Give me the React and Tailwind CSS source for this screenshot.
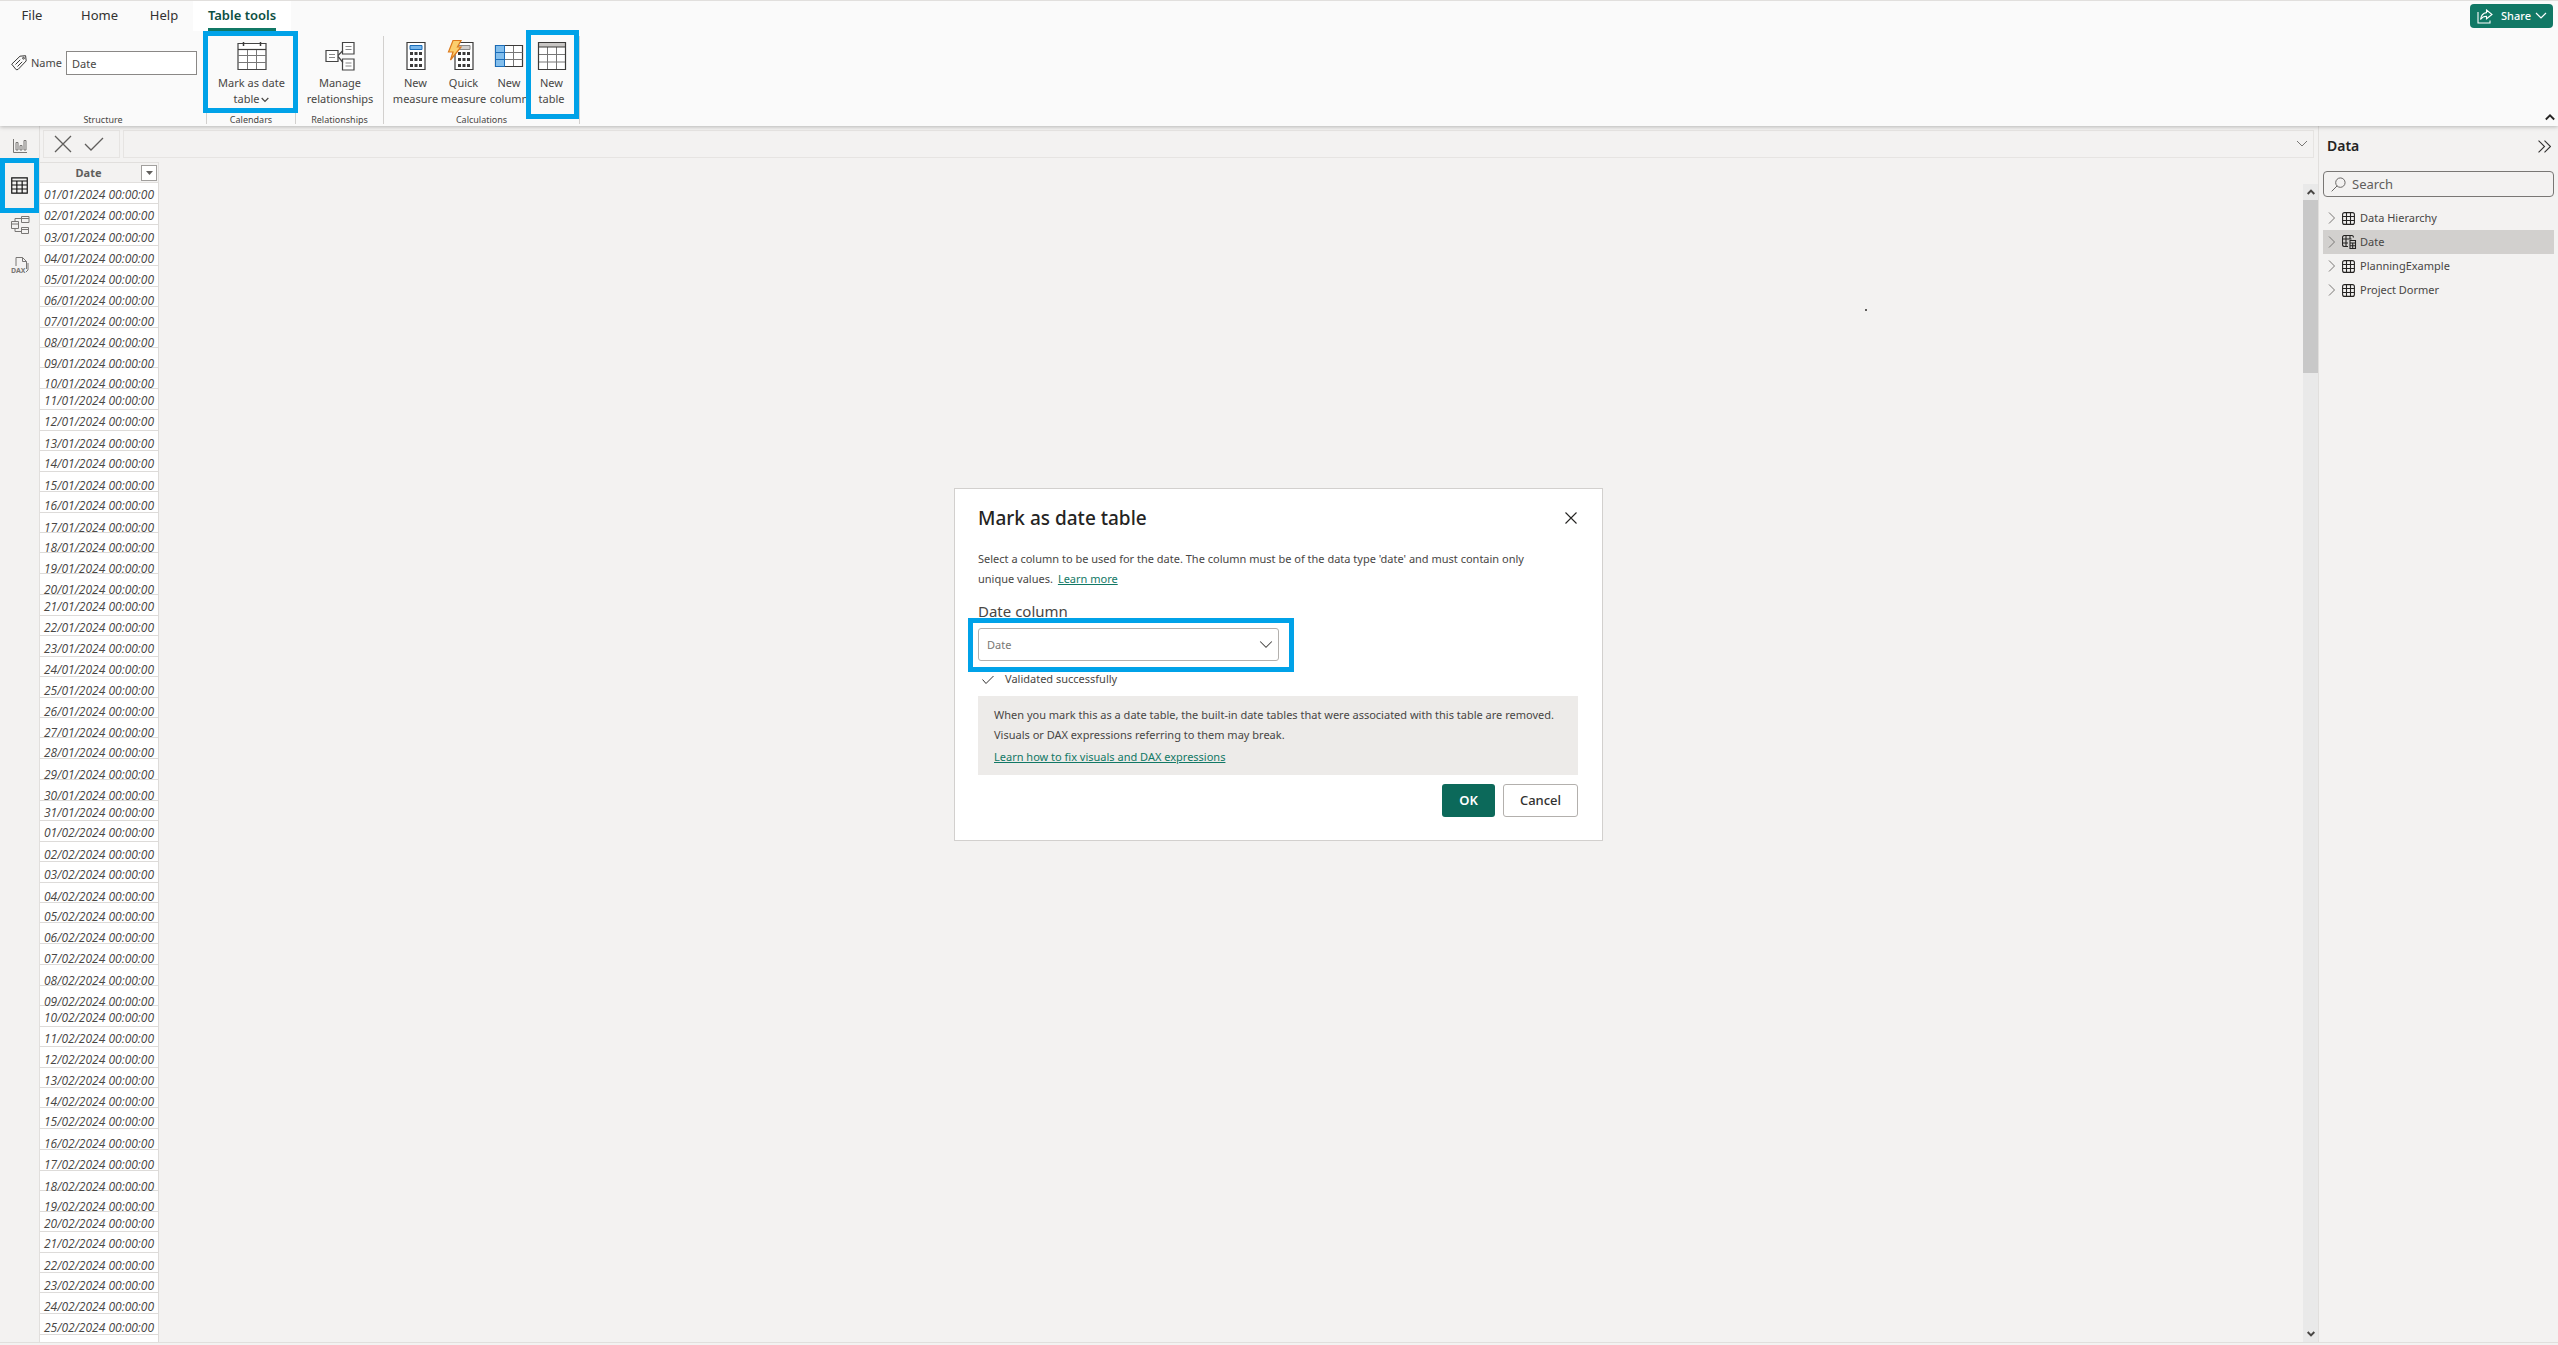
import { useState } from 'react';

// the grid repeats these heights, rows are not all the same
const ROW_HEIGHTS = [21, 21, 21, 20, 21, 20, 21, 20, 20];

const pad = (n) => String(n).padStart(2, '0');

const dates = Array.from({ length: 56 }, (_, i) => {
  const day = i < 31 ? i + 1 : i - 30;
  const month = i < 31 ? 1 : 2;
  return `${pad(day)}/${pad(month)}/2024 00:00:00`;
});

const tables = ['Data Hierarchy', 'Date', 'PlanningExample', 'Project Dormer'];

function Highlight({ className }) {
  return <span className={`pointer-events-none absolute z-10 border-[5px] border-[#00a2e8] ${className}`} />;
}

function Chevron({ className, d = 'M1 3l5 5 5-5', width = 1 }) {
  return (
    <svg viewBox="0 0 12 12" className={className} fill="none" stroke="currentColor" strokeWidth={width}>
      <path d={d} />
    </svg>
  );
}

function TagIcon() {
  return (
    <svg viewBox="0 0 16 16" className="size-4 shrink-0" fill="none" stroke="#3b3a39" strokeWidth="1">
      <path d="M.7 9.2L9 1.2l5.6-.5.6 5.2-8.2 8.6-1.8.2L.7 9.2z" />
      <path d="M4.5 9.5l4.7-4.7M6.5 11.5l4.7-4.7" />
      <circle cx="12.5" cy="3.2" r=".9" />
    </svg>
  );
}

function CalendarIcon() {
  return (
    <svg viewBox="0 0 30 30" className="size-[30px]" fill="none" stroke="#3b3a39" strokeWidth="1">
      <path d="M1 2.5h28v26H1z" fill="#fff" stroke="#444" strokeWidth="1.2" />
      <path d="M1 8.5h28" strokeWidth="1.2" />
      <path d="M6.5 1v4M23.5 1v4" strokeWidth="1.5" />
      <path d="M1 14.5h28M1 21.5h28M10.5 9v19M19.5 9v19" stroke="#777" />
    </svg>
  );
}

function RelationshipsIcon() {
  return (
    <svg viewBox="0 0 30 30" className="size-[30px]" fill="none" stroke="#444" strokeWidth="1.2">
      <path d="M1 9.5h12v11H1zM17.500 1.500h11.500v11.500H17.500zM17.500 18h11.500v11H17.500z" fill="#fff" />
      <path d="M13 14.500l5-5M13 15.500l5 6" />
      <path d="M4 13.500h6M4 16.500h6M20.500 5.500h6M20.500 8.500h6M20.500 22h6M20.500 25h6" stroke="#888" />
    </svg>
  );
}

function CalculatorIcon({ screen = '#7ab8ec', edge = '#1a6cb8', bolt }) {
  return (
    <svg viewBox="0 0 30 30" className="size-[30px] overflow-visible">
      <path d="M6 1.500h18v27H6z" fill="#fff" stroke="#3b3a39" strokeWidth="1.2" />
      <path d="M9 4.500h12v4H9z" fill={screen} stroke={edge} />
      <path
        d="M9 11h3v3H9zM13.500 11h3v3h-3zM18 11h3v3h-3zM9 17h3v3H9zM13.500 17h3v3h-3zM18 17h3v3h-3zM9 23h3v3H9zM13.500 23h3v3h-3zM18 23h3v3h-3z"
        fill="#3b3a39"
      />
      {bolt && (
        <path d="M4 -.5h8L8.500 6H12L1.500 19l2.500-8H-.5z" fill="#fbcf6e" stroke="#dd7a1c" strokeWidth="1.2" />
      )}
    </svg>
  );
}

function ColumnIcon() {
  return (
    <svg viewBox="0 0 30 30" className="size-[30px]" fill="none" stroke="#555" strokeWidth="1">
      <path d="M1.500 4.500h27v21h-27z" fill="#fff" stroke="#3b3a39" strokeWidth="1.2" />
      <path d="M10.500 11.500h18M10.500 18.500h18M19.500 5v20" stroke="#777" />
      <path d="M1.500 4.500h9v21h-9z" fill="#83beec" stroke="#1a6cb8" />
      <path d="M1.500 11.500h9M1.500 18.500h9" stroke="#1a6cb8" />
    </svg>
  );
}

function NewTableIcon() {
  return (
    <svg viewBox="0 0 30 30" className="size-[30px]" fill="none">
      <path d="M1.500 1.500h27v27h-27z" fill="#fff" />
      <path d="M2 2h26v4H2z" fill="#c8c6c4" />
      <path d="M1.500 13.500h27M1.500 21h27M10.500 6v22M19.500 6v22" stroke="#777" />
      <path d="M1.500 1.500h27v27h-27zM1.500 6h27" stroke="#3b3a39" strokeWidth="1.2" />
    </svg>
  );
}

function ReportViewIcon() {
  return (
    <svg viewBox="0 0 16 16" className="size-4" fill="none" stroke="#797775" strokeWidth="1">
      <path d="M1.500 1v13.500H15M4 4.500h2v7.500H4zM8 7.500h2V12H8zM12 2.500h2V12h-2z" />
    </svg>
  );
}

function TableViewIcon() {
  return (
    <svg viewBox="0 0 16 16" className="size-[17px]" fill="none" stroke="#111" strokeWidth="1.1">
      <path d="M.7.9h14.600v14.200H.7zM.7 3.800h14.600M.7 7.500h14.600M.7 11.300h14.600M5.500 3.800v11.200M10.500 3.800v11.200" />
    </svg>
  );
}

function ModelViewIcon() {
  return (
    <svg viewBox="0 0 20 20" className="size-5" fill="none" stroke="#797775" strokeWidth="1">
      <path d="M1.500 6.500h7v7h-7zM1.500 9h7M11.500 1.500h7.500v6h-7.500zM11.500 3.500h7.500M11.500 12.500h7v6h-7zM11.500 14.500h7" />
      <path d="M5 6.500v-3h6.500M5 13.500v3h6.500" />
    </svg>
  );
}

function DaxViewIcon() {
  return (
    <svg viewBox="0 0 18 18" className="size-[18px] overflow-visible" fill="none" stroke="#797775" strokeWidth="1">
      <path d="M5 10V1.500h6.500l4 4V13M11.500 1.500v4h4M17 7v7l-2 2" />
      <text x="0" y="17" fontSize="7" fontWeight="700" fill="#797775" stroke="none">
        DAX
      </text>
    </svg>
  );
}

function FieldTableIcon({ calculated }) {
  if (calculated) {
    return (
      <svg viewBox="0 0 15 14" className="h-[14px] w-[15px]" fill="none" stroke="#252423" strokeWidth="1.1">
        <path d="M6 11.500H2.500a2 2 0 0 1-2-2v-7a2 2 0 0 1 2-2h7a2 2 0 0 1 2 2M.5 4h9M.5 8h5.500M4 .5v11M8 .5V4" />
        <path d="M8 5.500h5.500v8H8zM8 8h5.500M8 10.700h5.500M10.700 8v5.500" />
      </svg>
    );
  }
  return (
    <svg viewBox="0 0 13 13" className="mr-0.5 size-[13px]" fill="none" stroke="#252423" strokeWidth="1.1">
      <rect x=".6" y=".6" width="11.800" height="11.800" rx="2" />
      <path d="M4.500.6v11.800M8.500.6v11.800M.6 4.500h11.800M.6 8.500h11.800" />
    </svg>
  );
}

function ShareIcon() {
  return (
    <svg viewBox="0 0 16 15" className="h-[15px] w-4" fill="none" stroke="#fff" strokeWidth="1.1">
      <path d="M1 3v11h12v-2.500" />
      <path d="M9.500 1l5.500 4.500-5.500 4.300V7.300C7 7.300 5 8.300 3.500 10.500 4 6.500 6 4 9.500 3.600z" />
    </svg>
  );
}

function RibbonButton({ icon, children, className = '' }) {
  return (
    <button className={`flex flex-col items-center whitespace-nowrap text-[11px] leading-4 text-[#484644] ${className}`}>
      {icon}
      <span className="mt-1">{children}</span>
    </button>
  );
}

function RibbonGroup({ label, children, className = '' }) {
  return (
    <section className={`relative flex flex-col justify-between border-r border-[#d2d0ce] ${className}`}>
      <div className="flex justify-center pt-[5px] pl-px">{children}</div>
      <div className="text-center text-[9px] leading-[9px] text-[#484644]">{label}</div>
    </section>
  );
}

function Ribbon() {
  const [name, setName] = useState('Date');

  return (
    <header className="relative z-10 border-t border-[#e1dfdd] bg-[#fafafa] shadow-[0_1px_4px_rgba(0,0,0,0.25)]">
      <div className="flex h-[30px] items-start">
        <nav className="flex h-full items-center text-[13px] text-[#323130]">
          <button className="w-16 text-center">File</button>
          <button className="w-[71px] text-center">Home</button>
          <button className="w-[58px] text-center">Help</button>
          <button className="relative h-full w-[98px] bg-white text-center font-semibold text-[#0c4f43]">
            Table tools
            <span className="absolute inset-x-[15px] bottom-0 h-[3px] bg-[#117865]" />
          </button>
        </nav>
        <button className="mt-[3px] mr-[5px] ml-auto flex h-6 w-[83px] items-center rounded bg-[#117865] pl-[7px] text-[11px] font-medium text-white">
          <ShareIcon />
          <span className="ml-2">Share</span>
          <Chevron className="ml-1 size-3" width={1.2} />
        </button>
      </div>

      <div className="flex h-[95px] items-stretch">
        <div className="flex pt-[5px] pb-0.5">
          <RibbonGroup label="Structure" className="w-[207px]">
            <div className="flex w-full items-center pt-2.5 pl-2.5">
              <TagIcon />
              <label htmlFor="name" className="ml-1 w-[35px] text-[11px] text-[#484644]">Name</label>
              <input
                id="name"
                value={name}
                onChange={(e) => setName(e.target.value)}
                className="h-6 w-[131px] border border-[#8a8886] bg-white px-[5px] text-[11px] text-[#484644]"
              />
            </div>
          </RibbonGroup>
          <RibbonGroup label="Calendars" className="w-[89px]">
            <RibbonButton icon={<CalendarIcon />}>
              Mark as date
              <br />
              table
              <Chevron className="ml-0.5 inline size-2" width={1.8} />
            </RibbonButton>
            <Highlight className="-top-[5px] -right-[3px] -left-1 h-[82px]" />
          </RibbonGroup>
          <RibbonGroup label="Relationships" className="w-[88px]">
            <RibbonButton icon={<RelationshipsIcon />}>
              Manage
              <br />
              relationships
            </RibbonButton>
          </RibbonGroup>
          <RibbonGroup label="Calculations" className="w-[196px]">
            <RibbonButton icon={<CalculatorIcon />} className="w-12">
              New
              <br />
              measure
            </RibbonButton>
            <RibbonButton icon={<CalculatorIcon screen="#d2d0ce" edge="#8a8886" bolt />} className="w-12">
              Quick
              <br />
              measure
            </RibbonButton>
            <RibbonButton icon={<ColumnIcon />} className="w-[43px]">
              New
              <br />
              column
            </RibbonButton>
            <RibbonButton icon={<NewTableIcon />} className="w-[42px]">
              New
              <br />
              table
            </RibbonButton>
            <Highlight className="-top-1.5 right-0 h-[89px] w-[53px]" />
          </RibbonGroup>
        </div>
        <button aria-label="Collapse ribbon" className="mt-auto mr-[3px] mb-1 ml-auto text-[#252423]">
          <Chevron className="size-2.5" d="M1 9l5-5 5 5" width={2.2} />
        </button>
      </div>
    </header>
  );
}

function ViewRail() {
  return (
    <nav className="flex w-10 shrink-0 flex-col items-center border-r border-[#e1dfdd]">
      <button aria-label="Report view" className="flex h-8 w-full items-center justify-center pt-2">
        <ReportViewIcon />
      </button>
      <button aria-label="Table view" className="relative flex h-[55px] w-full items-center justify-center">
        <TableViewIcon />
        <Highlight className="inset-y-0 right-0 left-0" />
      </button>
      <button aria-label="Model view" className="mt-0.5 flex h-5 w-full items-center justify-center">
        <ModelViewIcon />
      </button>
      <button aria-label="DAX query view" className="mt-5 flex h-5 w-full items-center justify-center">
        <DaxViewIcon />
      </button>
    </nav>
  );
}

function FormulaBar() {
  return (
    <div className="flex gap-[3px] py-1 pr-1 pl-[3px]">
      <div className="flex h-7 w-[77px] items-center gap-3 border border-[#e6e4e2] pl-2.5 text-[#605e5c]">
        <button aria-label="Cancel formula">
          <svg viewBox="0 0 18 18" className="size-[18px]" fill="none" stroke="currentColor" strokeWidth="1.3">
            <path d="M1 1l16 16M17 1L1 17" />
          </svg>
        </button>
        <button aria-label="Commit formula">
          <svg viewBox="0 0 20 18" className="h-[18px] w-5" fill="none" stroke="currentColor" strokeWidth="1.3">
            <path d="M1 9l6 6L19 3" />
          </svg>
        </button>
      </div>
      <div className="flex h-7 flex-1 items-center border border-[#e6e4e2] pr-[5px]">
        <input aria-label="Formula" className="h-full flex-1 px-2 text-[11px] outline-none" />
        <button aria-label="Expand formula bar" className="text-[#797775]">
          <Chevron className="size-3" />
        </button>
      </div>
    </div>
  );
}

function DataGrid() {
  return (
    <div className="relative flex flex-1">
      <div className="flex flex-col bg-white">
        <table className="w-[117px] border-separate border-spacing-0 text-[#484644]">
          <thead>
            <tr className="h-[21px]">
              <th className="border-y border-r border-[#e1dfdd] bg-[#f3f2f1] p-0">
                <div className="flex items-center">
                  <span className="flex-1 pr-1 text-[11px] leading-[18px] font-bold text-[#605e5c]">Date</span>
                  <button aria-label="Filter Date" className="mr-px flex size-4 justify-center border border-[#a19f9d] bg-white pt-[5px]">
                    <svg viewBox="0 0 7 4" className="h-1 w-[7px]" fill="#605e5c">
                      <path d="M0 0h7L3.500 4z" />
                    </svg>
                  </button>
                </div>
              </th>
            </tr>
          </thead>
          <tbody>
            {dates.map((date, i) => (
              <tr key={date} style={{ height: ROW_HEIGHTS[i % ROW_HEIGHTS.length] }}>
                <td
                  className="border-r border-b border-[#dddbd9] px-1 text-right align-top font-['Open_Sans',sans-serif] text-[12px] leading-[6px] whitespace-nowrap italic"
                  style={{ paddingTop: 9 + Math.floor((i % 10) / 2) }}
                >
                  {date}
                </td>
              </tr>
            ))}
          </tbody>
        </table>
        <div className="flex-1 border-r border-[#dddbd9]" />
      </div>
      {/* stray mark on the empty canvas */}
      <span className="absolute top-[147px] left-[1825px] size-0.5 bg-[#605e5c]" />
      <div className="mt-[22px] ml-auto flex w-[15px] flex-col items-center bg-[#e9e9e9] text-[#484644]">
        <Chevron className="my-1 size-2" d="M1 9l5-5 5 5" width={3} />
        <div className="h-[173px] w-full bg-[#c8c8c8]" />
        <Chevron className="mt-auto mb-1 size-2" width={3} />
      </div>
    </div>
  );
}

function DataPane() {
  const [search, setSearch] = useState('');

  return (
    <aside className="w-60 shrink-0 border-l border-[#e1dfdd] px-1">
      <div className="flex items-center justify-between pt-2 pr-[3px] pl-1">
        <h2 className="text-[14px] leading-6 font-semibold text-[#252423]">Data</h2>
        <button aria-label="Collapse pane" className="text-[#323130]">
          <svg viewBox="0 0 12 12" className="size-[13px]" fill="none" stroke="currentColor">
            <path d="M.5.500L6 6 .5 11.500M6 .500L11.500 6 6 11.500" />
          </svg>
        </button>
      </div>
      <div className="mt-[13px] flex h-[26px] items-center rounded-sm border border-[#797775] pl-[7px]">
        <svg viewBox="0 0 16 16" className="size-[15px]" fill="none" stroke="#605e5c">
          <circle cx="10" cy="6" r="5" />
          <path d="M6.500 9.500L.7 15.300" />
        </svg>
        <input
          aria-label="Search"
          placeholder="Search"
          value={search}
          onChange={(e) => setSearch(e.target.value)}
          className="min-w-0 flex-1 pt-0.5 pl-1.5 text-[13px] text-[#323130] outline-none placeholder:text-[#605e5c]"
        />
      </div>
      <ul className="mt-[9px] text-[11px] text-[#484644]">
        {tables.map((table) => (
          <li key={table}>
            <button className={`flex h-6 w-full items-center pl-[3px] ${table === 'Date' ? 'bg-[#d2d0ce]' : ''}`}>
              <Chevron className="mr-1 size-3 text-[#797775]" d="M3 .5L8.500 6 3 11.500" />
              <FieldTableIcon calculated={table === 'Date'} />
              <span className="ml-[3px] pt-px">{table}</span>
            </button>
          </li>
        ))}
      </ul>
    </aside>
  );
}

function MarkAsDateDialog() {
  const [column, setColumn] = useState('Date');

  return (
    <div className="fixed inset-0 z-20 flex items-center justify-center pr-px pb-4">
      <div
        role="dialog"
        aria-labelledby="dialog-title"
        className="w-[649px] border border-[#d2d0ce] bg-white pt-[15px] pr-6 pb-[23px] pl-[23px] text-[11px] text-[#484644]"
      >
        <div className="flex items-center justify-between">
          <h1 id="dialog-title" className="text-[19px] leading-7 font-medium text-[#252423]">Mark as date table</h1>
          <button aria-label="Close" className="mr-px text-[#252423]">
            <svg viewBox="0 0 12 12" className="size-3" fill="none" stroke="currentColor" strokeWidth="1.1">
              <path d="M.5.500l11 11M11.500.500l-11 11" />
            </svg>
          </button>
        </div>

        <div className="mt-[17px] leading-5">
          <p>Select a column to be used for the date. The column must be of the data type 'date' and must contain only</p>
          <p className="flex gap-[5px]">
            <span>unique values.</span>
            <a href="#learn" className="text-[#117865] underline">Learn more</a>
          </p>
        </div>

        <label htmlFor="column" className="mt-3 block text-[15px] leading-5">Date column</label>
        <div className="relative mt-[7px] w-[301px]">
          <select
            id="column"
            value={column}
            onChange={(e) => setColumn(e.target.value)}
            className="h-[33px] w-full appearance-none rounded-[3px] border border-[#b3b0ad] bg-white px-2 pt-px text-[11px] text-[#797775]"
          >
            <option>Date</option>
          </select>
          <Chevron className="pointer-events-none absolute top-2.5 right-1.5 size-[14px] text-[#484644]" width={0.9} />
          <Highlight className="-top-2.5 -right-[15px] -bottom-[11px] -left-2.5" />
        </div>

        <div className="mt-2 flex items-center pl-1 leading-5">
          <svg viewBox="0 0 12 12" className="mr-[11px] size-3" fill="none" stroke="#323130">
            <path d="M.5 6.500l3.500 4L11.500 3" />
          </svg>
          Validated successfully
        </div>

        <div className="mt-[7px] bg-[#edebe9] pt-[9px] pb-2 pl-4 leading-5 whitespace-nowrap">
          <p>
            When you mark this as a date table, the built-in date tables that were associated with this table are removed.
            <br />
            Visuals or DAX expressions referring to them may break.
          </p>
          <a href="#fix" className="mt-0.5 block text-[#117865] underline">Learn how to fix visuals and DAX expressions</a>
        </div>

        <div className="mt-[9px] flex justify-end gap-2 text-[13px] font-medium">
          <button className="h-[33px] w-[53px] rounded-[3px] bg-[#0c695a] pt-px font-semibold text-white">OK</button>
          <button className="h-[33px] w-[75px] rounded-[3px] border border-[#b3b0ad] pt-px text-[#323130]">Cancel</button>
        </div>
      </div>
    </div>
  );
}

function App() {
  return (
    <div className="flex min-h-screen flex-col bg-[#f3f2f1] font-['Noto_Sans','Open_Sans',sans-serif]">
      <Ribbon />
      <div className="flex flex-1 border-b border-[#e1dfdd]">
        <ViewRail />
        <main className="flex flex-1 flex-col">
          <FormulaBar />
          <DataGrid />
        </main>
        <DataPane />
      </div>
      <footer className="h-0.5" />
      <MarkAsDateDialog />
    </div>
  );
}

export default App;
